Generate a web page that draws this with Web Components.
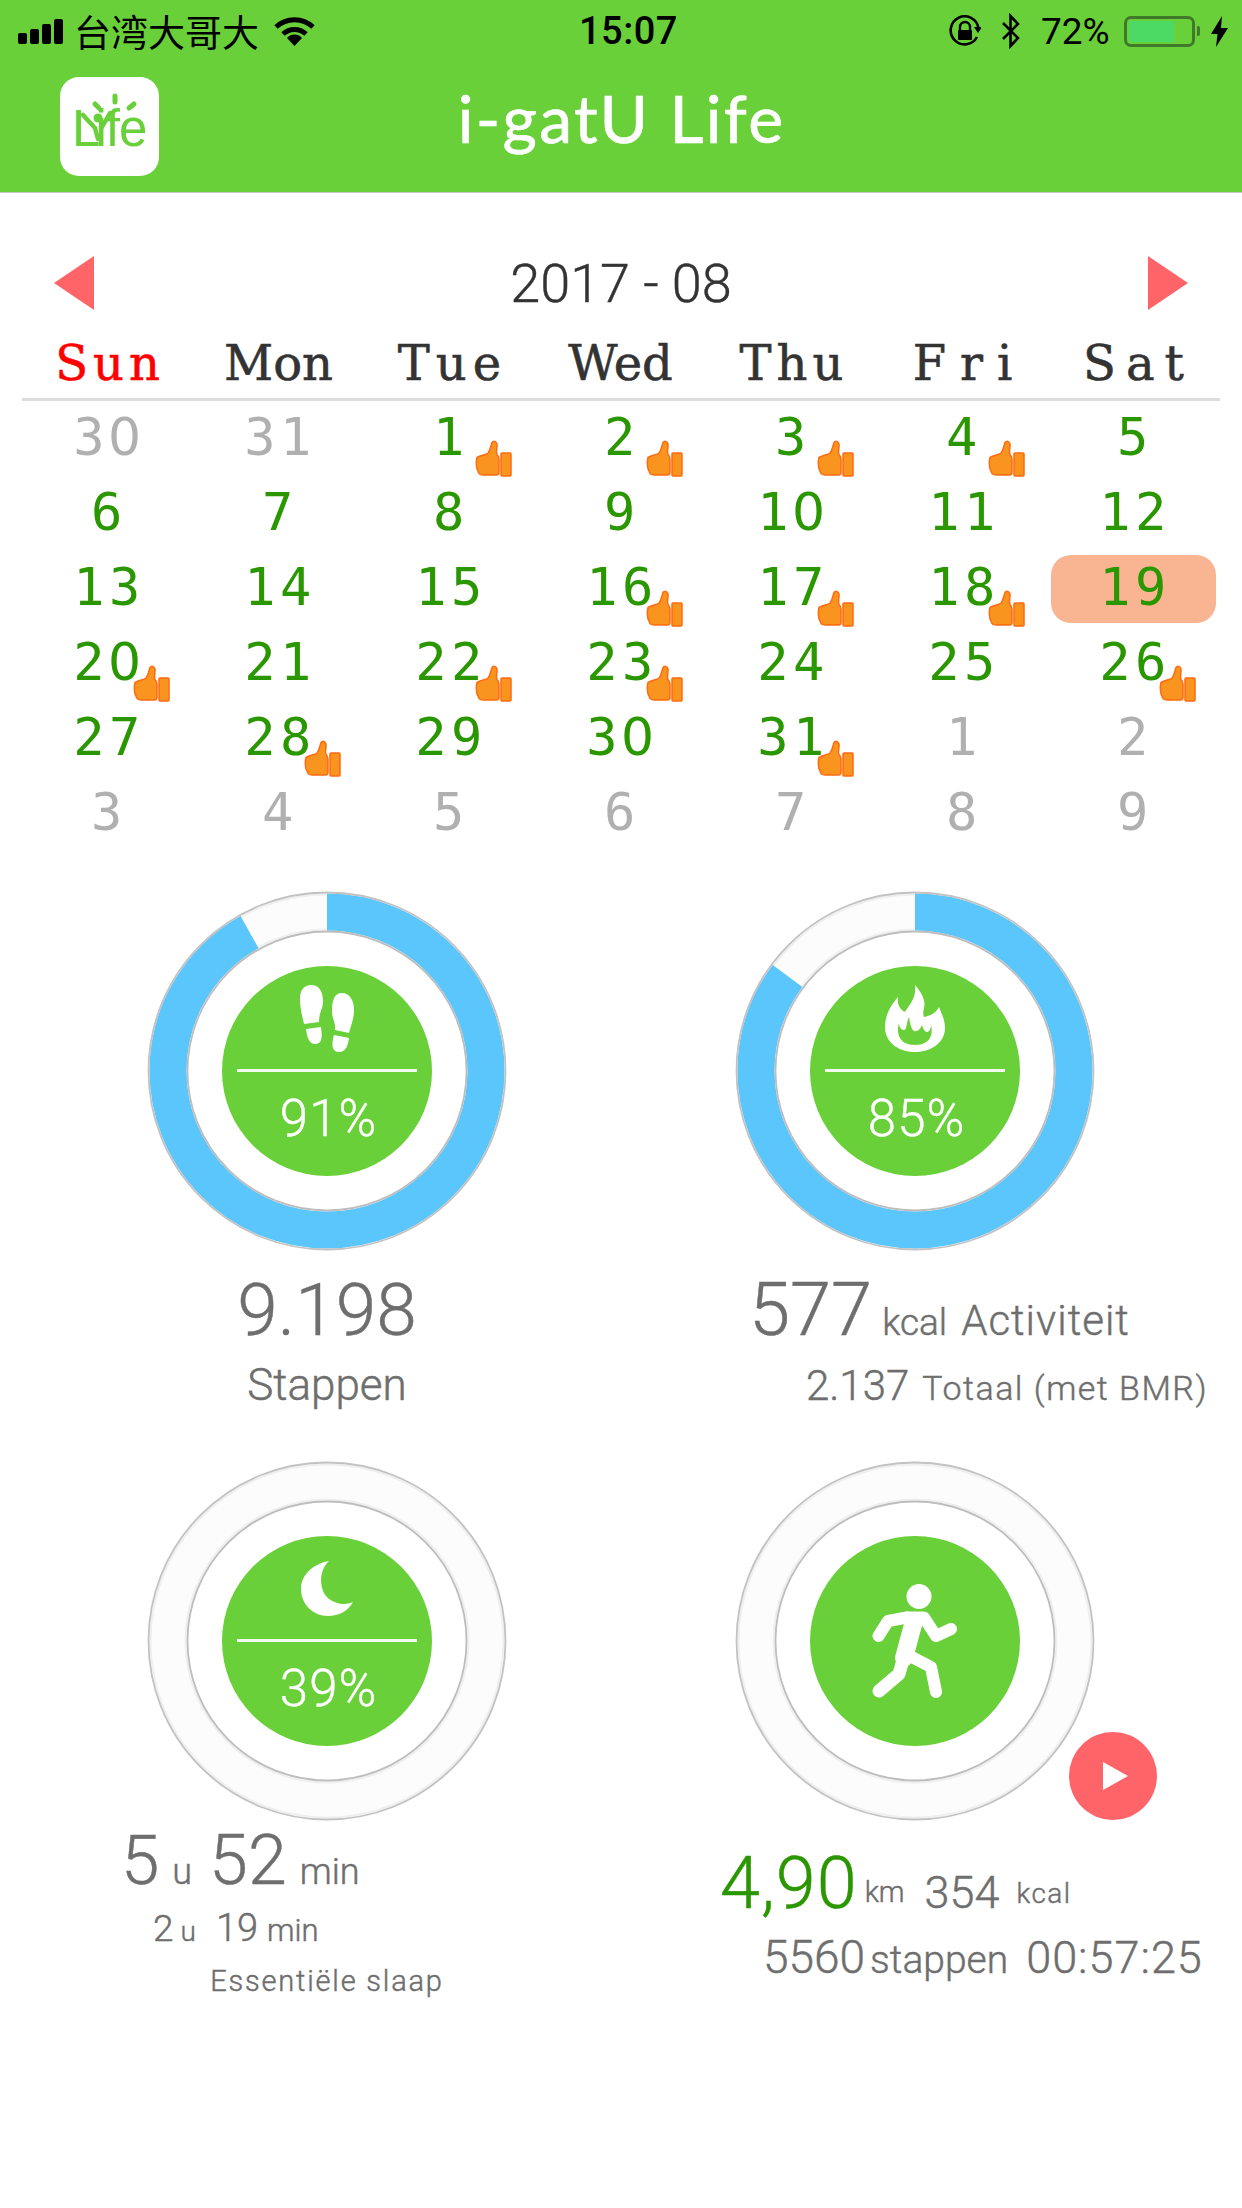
<!DOCTYPE html>
<html lang="nl">
<head>
<meta charset="utf-8">
<title>i-gotU Life</title>
<style>
  html, body { margin: 0; background: #fff; }
  body { width: 1242px; height: 2208px; overflow: hidden; font-family: Roboto, "Liberation Sans", sans-serif; }
</style>
</head>
<body>
<app-header></app-header>
<month-calendar></month-calendar>
<stat-grid>
  <stat-panel>
    <stat-ring percent="91.9" value="91%" icon="feet"></stat-ring>
    <steps-stat slot="text"></steps-stat>
  </stat-panel>
  <stat-panel side="right">
    <stat-ring percent="85.2" value="85%" icon="flame"></stat-ring>
    <calories-stat slot="text"></calories-stat>
  </stat-panel>
  <stat-panel>
    <stat-ring percent="0" value="39%" icon="moon"></stat-ring>
    <sleep-stat slot="text"></sleep-stat>
  </stat-panel>
  <stat-panel side="right">
    <stat-ring percent="0" icon="runner" play></stat-ring>
    <run-stat slot="text"></run-stat>
  </stat-panel>
</stat-grid>

<script>
// small helper, every element below is template + open shadow
function tpl(html) {
  const t = document.createElement("template");
  t.innerHTML = html;
  return t;
}
function mount(el, t) {
  el.attachShadow({ mode: "open" }).append(t.content.cloneNode(true));
  return el.shadowRoot;
}

const headerTemplate = tpl(`
  <style>
    :host { display: block; height: 192px; background: #69d039; border-bottom: 1px solid #c9c9c9; color: #000; }
    .status { display: flex; align-items: center; height: 62px; font-size: 36px; padding-left: 18px; }
    .left { display: flex; align-items: center; width: 561px; flex: none; }
    .bars { display: flex; align-items: flex-end; gap: 3px; height: 25px; }
    .bars i { width: 9px; border-radius: 2px; background: #000; }
    .carrier { font-family: "Noto Sans CJK TC", sans-serif; font-size: 37px; line-height: 62px; margin-left: 11px; width: 185px; white-space: nowrap; }
    .wifi { margin-left: 15px; }
    .time { font-weight: 500; font-size: 38px; width: 97px; text-align: center; letter-spacing: .5px; white-space: nowrap; }
    .right { display: flex; align-items: center; margin-left: auto; padding-right: 14px; }
    .pct { font-size: 37px; margin-left: 19px; width: 74px; white-space: nowrap; }
    .batt { width: 71px; height: 31px; box-sizing: border-box; margin-left: 9px; border: 3px solid #41792a; border-radius: 7px; padding: 2px; }
    .batt b { display: block; width: 45px; height: 100%; background: #4cd964; }
    .nub { width: 3px; height: 10px; background: #41792a; margin-left: 2px; border-radius: 0 2px 2px 0; }
    .bolt { margin-left: 11px; }
    .bar { position: relative; display: flex; height: 130px; }
    .logo { position: absolute; left: 60px; top: 15px; width: 99px; height: 99px; background: #fff; border-radius: 19px; overflow: hidden; color: #69d039; font: 51px/1 "Liberation Sans", sans-serif; }
    .logo span { position: absolute; left: 12px; top: 26px; letter-spacing: -1px; white-space: nowrap; }
    .logo span em { font-style: normal; margin-left: -4px; }
    .logo svg { position: absolute; left: 0; top: 0; }
    .title { flex: 1; text-align: center; padding-left: 1px; color: #fff; font: 400 66px/112px Lato, sans-serif; letter-spacing: 2.3px; -webkit-text-stroke: .7px #fff; }
  </style>
  <div class="status">
    <div class="left">
      <div class="bars"><i style="height:11px"></i><i style="height:15px"></i><i style="height:20px"></i><i style="height:25px"></i></div>
      <span class="carrier">台湾大哥大</span>
      <svg class="wifi" width="41" height="30" viewBox="0 0 41 30">
        <path d="M2 11A27 27 0 0 1 39 11" fill="none" stroke="#000" stroke-width="5"/>
        <path d="M9 18A17 17 0 0 1 32 18" fill="none" stroke="#000" stroke-width="5"/>
        <path d="M20.5 30L13 22A10 10 0 0 1 28 22Z"/>
      </svg>
    </div>
    <span class="time">15:07</span>
    <div class="right">
      <svg width="32" height="32" viewBox="0 0 32 32">
        <path d="M28 22A14 14 0 1 1 29.5 13" fill="none" stroke="#000" stroke-width="2.6"/>
        <path d="M25 12h8l-4 6z"/>
        <path d="M11 15V12a5 5 0 0 1 10 0v3" fill="none" stroke="#000" stroke-width="2.4"/>
        <rect x="9" y="15" width="14" height="10" rx="1"/>
      </svg>
      <svg style="margin-left:19px" width="22" height="36" viewBox="0 0 22 36">
        <path d="M3 10L18 25L10.5 33V3L18 11L3 26" fill="none" stroke="#000" stroke-width="2.6"/>
      </svg>
      <span class="pct">72%</span>
      <div class="batt"><b></b></div>
      <div class="nub"></div>
      <svg class="bolt" width="17" height="31" viewBox="0 0 17 31"><path d="M11 0L0 18h6.5L5 31L17 12h-7z"/></svg>
    </div>
  </div>
  <div class="bar">
    <div class="logo">
      <span>L<em>i</em>fe</span>
      <svg width="99" height="99" viewBox="0 0 99 99">
        <path d="M23 38L35 51L38 62M50 36L42 50" fill="none" stroke="#69d039" stroke-width="4.5" stroke-linecap="round"/>
        <circle cx="38" cy="41" r="4.5" fill="#69d039"/>
        <path d="M35 27L39 31M55 19V25M74 27L69 31" fill="none" stroke="#69d039" stroke-width="5" stroke-linecap="round"/>
      </svg>
    </div>
    <div class="title">i-gatU Life</div>
  </div>
`);
class AppHeader extends HTMLElement {
  constructor() {
    super();
    mount(this, headerTemplate);
  }
}

const thumbTemplate = tpl(`
  <style>
    :host { position: absolute; left: 111px; top: 39px; width: 38px; height: 38px; }
    svg { display: block; }
  </style>
  <svg width="38" height="38" viewBox="0 0 38 38">
    <path d="M2 17.5C6 15 11 15 13 13C15.5 10 16 5 17 2.5C18.5 .5 21 1 22 4C22.5 8 20.5 12 22 14.5C23.5 16 24 17 24 19V32C24 34 23 35 21.5 35H8C5 35 3.5 34 3 31C1 28 1 21 2 17.5Z" fill="#f9951e" stroke="#ff6a13" stroke-width="1.5"/>
    <rect x="26" y="13" width="10" height="23" rx="1" fill="#f9951e" stroke="#ff6a13" stroke-width="1.5"/>
  </svg>
`);
class ThumbBadge extends HTMLElement {
  constructor() {
    super();
    mount(this, thumbTemplate);
  }
}

const dayTemplate = tpl(`
  <style>
    :host { display: block; position: relative; height: 75px; text-align: center; text-indent: 3px; color: #2a9600; font: 52px/73px "DejaVu Sans Mono", monospace; letter-spacing: 4.5px; }
    :host([muted]) { color: #b0b0b0; }
    :host([today])::before { content: ""; position: absolute; left: 3px; right: 3px; top: 4px; height: 68px; border-radius: 20px; background: #f9b592; }
    .num { position: relative; }
    .z { font-family: "DejaVu Sans", sans-serif; margin-left: -1px; letter-spacing: 3.5px; }
  </style>
  <span class="num"></span>
  <slot></slot>
`);
class CalDay extends HTMLElement {
  constructor() {
    super();
    mount(this, dayTemplate);
  }
  connectedCallback() {
    // the mono font has a dotted zero, reference zero is plain
    this.shadowRoot.querySelector(".num").innerHTML = this.getAttribute("n").replace(/0/g, '<span class="z">0</span>');
  }
}

const calendarTemplate = tpl(`
  <style>
    :host { display: block; padding: 60px 22px 0; }
    .head { display: flex; align-items: center; justify-content: space-between; height: 60px; padding: 0 32px; font-size: 54px; font-weight: 300; color: #333; -webkit-text-stroke: .4px #333; }
    .arrow { width: 0; height: 0; border-top: 27px solid transparent; border-bottom: 27px solid transparent; }
    .prev { border-right: 40px solid #ff6469; }
    .next { border-left: 40px solid #ff6469; }
    .week { display: grid; grid-template-columns: repeat(7, 171px); height: 85px; border-bottom: 3px solid #dcdcdc; font: 48px/100px "DejaVu Serif", serif; text-align: center; color: #333; -webkit-text-stroke: .6px currentColor; }
    .week .sun { color: #f00; }
    .days { display: grid; grid-template-columns: repeat(7, 171px); }
  </style>
  <div class="head"><div class="arrow prev"></div><span>2017 - 08</span><div class="arrow next"></div></div>
  <div class="week">
    <span class="sun" style="letter-spacing:5px;text-indent:5px">Sun</span><span>Mon</span><span style="letter-spacing:6px;text-indent:6px">Tue</span><span>Wed</span><span style="letter-spacing:5px;text-indent:5px">Thu</span><span style="letter-spacing:14px;text-indent:14px">Fri</span><span style="letter-spacing:10px;text-indent:10px">Sat</span>
  </div>
  <div class="days"></div>
`);
class MonthCalendar extends HTMLElement {
  constructor() {
    super();
    const root = mount(this, calendarTemplate);
    const liked = [1, 2, 3, 4, 16, 17, 18, 20, 22, 23, 26, 28, 31];
    const cells = [30, 31];
    for (let d = 1; d <= 31; d++) cells.push(d);
    for (let d = 1; d <= 9; d++) cells.push(d);
    const days = root.querySelector(".days");
    cells.forEach((d, i) => {
      const muted = i < 2 || i > 32;
      const cell = document.createElement("cal-day");
      cell.setAttribute("n", d);
      if (muted) cell.setAttribute("muted", "");
      if (!muted && d === 19) cell.setAttribute("today", "");
      if (!muted && liked.includes(d)) cell.append(document.createElement("thumb-badge"));
      days.append(cell);
    });
  }
}

const icons = {
  feet: `<svg width="54" height="67" viewBox="0 0 54 67" fill="#fff">
    <path d="M11 0C19 0 23 6 23 17C23 24 19 27 19 37L4 39C2 30 0 24 0 14C0 5 4 0 11 0Z"/>
    <path d="M6 44L21 42C22 50 23 59 15 59C9 59 7 52 6 44Z"/>
    <path d="M42 8C50 8 54 16 54 25C54 34 51 40 49 48L35 45C36 38 32 34 32 26C32 16 34 8 42 8Z"/>
    <path d="M34 50L49 53C48 60 46 67 39 67C32 67 31 60 34 50Z"/>
  </svg>`,
  flame: `<svg width="60" height="68" viewBox="0 0 60 68">
    <path fill="#fff" d="M30 0C37 8 41 16 39 23C38 27 38 30 39 32C45 31 51 28 54 22C56 28 60 34 60 43C60 57 47 67 30 67C13 67 0 57 0 42C0 30 6 20 13 12C12 18 14 24 20 27C22 22 32 14 30 0Z"/>
    <path fill="#69d039" d="M14 38C14 42 16 45 19 45C22 45 21 38 24 32C25 38 26 44 29 46C32 47 35 45 37 40C38 44 40 47 42 47C44 47 46 44 46 40C48 47 47 60 30 60C14 60 11 48 14 38Z"/>
  </svg>`,
  moon: `<svg width="52" height="55" viewBox="0 0 52 55" fill="#fff">
    <path d="M28 0C15 2 0 12 0 28C0 43 12 55 27 55C38 55 47 50 52 41C46 44 36 44 28 38C18 30 17 10 28 0Z"/>
  </svg>`,
  runner: `<svg width="86" height="115" viewBox="0 0 86 115" fill="none" stroke="#fff" stroke-linecap="round" stroke-linejoin="round">
    <circle cx="47" cy="12.5" r="12.5" fill="#fff" stroke="none"/>
    <path stroke-width="12" d="M6.500 52L16 37L35 33.5"/>
    <path stroke-width="12" d="M35 33.5H52L64 52L79 45"/>
    <path stroke-width="18" d="M42 37L32 74"/>
    <path stroke-width="13" d="M31 76L27 90L7 107"/>
    <path stroke-width="12" d="M36 71L59 83L64 108"/>
  </svg>`,
};

const ringTemplate = tpl(`
  <style>
    :host { display: block; position: relative; width: 360px; height: 360px; margin: 0 auto; }
    svg.track { display: block; transform: rotate(-90deg); }
    .core { position: absolute; left: 75px; top: 75px; width: 210px; height: 210px; border-radius: 50%; background: #69d039; color: #fff; display: flex; flex-direction: column; align-items: center; overflow: hidden; }
    .top { flex: none; height: 106px; display: flex; align-items: center; justify-content: center; box-sizing: border-box; border-bottom: 3px solid #f2fbee; width: 180px; padding-top: 2px; }
    .top svg { display: block; }
    .pct { font-size: 51px; font-weight: 300; line-height: 1; margin-top: 21px; padding-left: 3px; letter-spacing: 1px; -webkit-text-stroke: .4px #fff; }
    :host([play]) .core { justify-content: center; }
    :host([play]) .top { border: 0; padding: 0; height: auto; }
    .play { position: absolute; left: 334px; top: 271px; width: 88px; height: 88px; border-radius: 50%; background: #ff6469; display: none; align-items: center; justify-content: center; }
    :host([play]) .play { display: flex; }
    .play i { width: 0; height: 0; margin-left: 5px; border-left: 25px solid #fff; border-top: 14px solid transparent; border-bottom: 14px solid transparent; }
  </style>
  <svg class="track" width="360" height="360" viewBox="0 0 360 360" fill="none">
    <circle cx="180" cy="180" r="159" stroke="#fcfcfc" stroke-width="38"/>
    <circle cx="180" cy="180" r="176.5" stroke="#efefef" stroke-width="2"/>
    <circle cx="180" cy="180" r="141.5" stroke="#efefef" stroke-width="2"/>
    <circle class="arc" cx="180" cy="180" r="159" stroke="#5ac6fb" stroke-width="37" pathLength="100"/>
    <circle cx="180" cy="180" r="178.5" stroke="#c2c2c2" stroke-width="1.8"/>
    <circle cx="180" cy="180" r="139.5" stroke="#bdbdbd" stroke-width="1.8"/>
  </svg>
  <div class="core"><div class="top"></div><div class="pct"></div></div>
  <div class="play"><i></i></div>
`);
class StatRing extends HTMLElement {
  constructor() {
    super();
    const root = mount(this, ringTemplate);
    const p = parseFloat(this.getAttribute("percent")) || 0;
    root.querySelector(".arc").setAttribute("stroke-dasharray", `${p} ${100 - p}`);
    root.querySelector(".top").innerHTML = icons[this.getAttribute("icon")];
    const value = this.getAttribute("value");
    if (value) root.querySelector(".pct").textContent = value;
    else root.querySelector(".pct").remove();
  }
}

const gridTemplate = tpl(`
  <style>
    :host { display: grid; grid-template-columns: 621px 621px; grid-auto-rows: 570px; padding-top: 40px; color: #6e6e6e; -webkit-text-stroke: .45px currentColor; font-weight: 300; }
  </style>
  <slot></slot>
`);
class StatGrid extends HTMLElement {
  constructor() {
    super();
    mount(this, gridTemplate);
  }
}

const panelTemplate = tpl(`
  <style>
    :host { display: block; padding-left: 33px; min-width: 0; }
    :host([side="right"]) { padding-left: 0; padding-right: 33px; }
    ::slotted([slot="text"]) { display: block; }
  </style>
  <slot></slot>
  <slot name="text"></slot>
`);
class StatPanel extends HTMLElement {
  constructor() {
    super();
    mount(this, panelTemplate);
  }
}

const lineStyles = `
  :host { display: block; white-space: nowrap; }
  .l { display: flex; align-items: baseline; }
  .c { justify-content: center; }
`;

const stepsTemplate = tpl(`
  <style>${lineStyles}
    :host { padding-top: 14px; }
    .a { height: 90px; line-height: 90px; font-size: 73px; }
    .b { height: 61px; line-height: 61px; font-size: 44px; }
  </style>
  <div class="l c a">9.198</div>
  <div class="l c b">Stappen</div>
`);
class StepsStat extends HTMLElement {
  constructor() {
    super();
    mount(this, stepsTemplate);
  }
}

const caloriesTemplate = tpl(`
  <style>${lineStyles}
    :host { padding-top: 14px; }
    .a { height: 90px; line-height: 90px; padding-left: 128px; }
    .b { height: 61px; line-height: 61px; padding-left: 185px; }
  </style>
  <div class="l a"><span style="font-size:74px">577</span><span style="font-size:37px;margin-left:10px">kcal</span><span style="font-size:42px;margin-left:14px;letter-spacing:1px">Activiteit</span></div>
  <div class="l b"><span style="font-size:42px">2.137</span><span style="font-size:34px;margin-left:13px;letter-spacing:1.5px">Totaal (met BMR)</span></div>
`);
class CaloriesStat extends HTMLElement {
  constructor() {
    super();
    mount(this, caloriesTemplate);
  }
}

const sleepTemplate = tpl(`
  <style>${lineStyles}
    .a { height: 79px; line-height: 79px; padding-left: 88px; }
    .b { height: 56px; line-height: 56px; padding-left: 120px; }
    .d { height: 50px; line-height: 50px; font-size: 29px; letter-spacing: 1.8px; }
  </style>
  <div class="l a"><span style="font-size:69px">5</span><span style="font-size:36px;margin-left:13px">u</span><span style="font-size:70px;margin-left:17px">52</span><span style="font-size:36px;margin-left:13px">min</span></div>
  <div class="l b"><span style="font-size:37px">2</span><span style="font-size:28px;margin-left:7px">u</span><span style="font-size:38px;margin-left:20px">19</span><span style="font-size:31px;margin-left:9px">min</span></div>
  <div class="l c d">Essentiële slaap</div>
`);
class SleepStat extends HTMLElement {
  constructor() {
    super();
    mount(this, sleepTemplate);
  }
}

const runTemplate = tpl(`
  <style>${lineStyles}
    :host { padding-top: 19px; }
    .a { height: 87px; line-height: 87px; padding-left: 99px; }
    .b { height: 60px; line-height: 60px; padding-left: 142px; }
    .green { color: #2a9600; font-size: 72px; letter-spacing: 1px; }
    .up { display: inline-block; transform: translateY(-6px); }
  </style>
  <div class="l a"><span class="green">4,90</span><span class="up" style="font-size:29px;margin-left:7px">km</span><span style="font-size:45px;margin-left:20px">354</span><span class="up" style="font-size:28px;margin-left:17px;letter-spacing:1.5px;transform:translateY(-5px)">kcal</span></div>
  <div class="l b"><span style="font-size:46px">5560</span><span style="font-size:39px;margin-left:5px">stappen</span><span style="font-size:45px;margin-left:18px;letter-spacing:1px">00:57:25</span></div>
`);
class RunStat extends HTMLElement {
  constructor() {
    super();
    mount(this, runTemplate);
  }
}

customElements.define("thumb-badge", ThumbBadge);
customElements.define("cal-day", CalDay);
customElements.define("app-header", AppHeader);
customElements.define("month-calendar", MonthCalendar);
customElements.define("stat-ring", StatRing);
customElements.define("stat-grid", StatGrid);
customElements.define("stat-panel", StatPanel);
customElements.define("steps-stat", StepsStat);
customElements.define("calories-stat", CaloriesStat);
customElements.define("sleep-stat", SleepStat);
customElements.define("run-stat", RunStat);
</script>
</body>
</html>
